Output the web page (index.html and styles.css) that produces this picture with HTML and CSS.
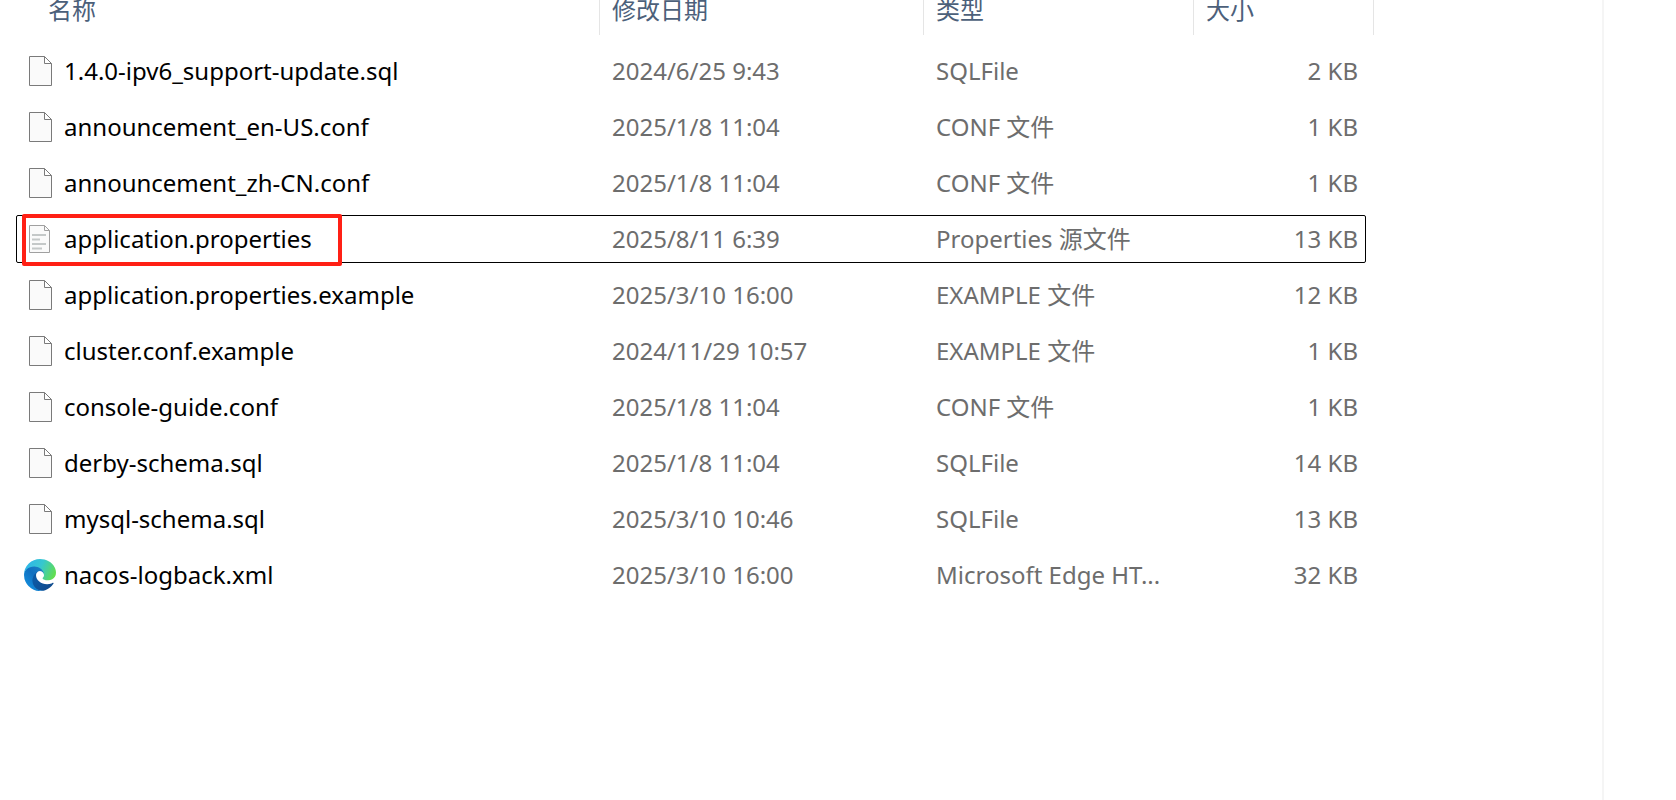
FILE: index.html
```html
<!DOCTYPE html>
<html lang="zh-CN">
<head>
  <meta charset="UTF-8" />
  <meta name="viewport" content="width=device-width, initial-scale=1" />
  <title>conf</title>
  <link rel="stylesheet" href="styles.css">
</head>
<body>

  <!-- shared icons -->
  <svg class="sprite" aria-hidden="true">
    <symbol id="icon-file" viewBox="0 0 32 32">
      <path d="M5.5 1.5h15v7h7v22h-22z" fill="#fafafa" stroke="#7a7a7a" />
      <path d="M20.5 1.5l7 7" fill="none" stroke="#7a7a7a" />
    </symbol>
    <symbol id="icon-text" viewBox="0 0 32 32">
      <path d="M5.5 2.5h15l5 5v22h-20z" fill="#fafafa" stroke="#a0a0a0" />
      <path d="M20.5 2.5v5h5" fill="none" stroke="#a0a0a0" />
      <path d="M8 12h14M8 16.500h8M8 21h14M8 25.500h10" fill="none" stroke="#c4c8c8" stroke-width="1.800" />
    </symbol>
    <symbol id="icon-edge" viewBox="0 0 256 256">
      <path fill="url(#edgeDeep)" d="M231 190.500c-3.400 1.800-6.900 3.400-10.500 4.700a101.700 101.700 0 0 1-35.900 6.500c-47.300 0-88.500-32.500-88.500-74.300a31.500 31.500 0 0 1 16.400-27.300c-42.800 1.800-53.800 46.400-53.800 72.500 0 74 68.100 81.400 82.800 81.400 7.900 0 19.800-2.300 27-4.600l1.300-.4a128.300 128.300 0 0 0 66.600-52.800 4 4 0 0 0-5.400-5.700z" />
      <path fill="url(#edgeBlue)" d="M105.700 241.400a79.200 79.200 0 0 1-22.700-21.300 80.700 80.700 0 0 1 29.500-120c3.200-1.500 8.500-4.100 15.600-4a32.400 32.400 0 0 1 25.700 13 31.900 31.900 0 0 1 6.300 18.700c0-.2 24.500-79.600-80-79.600-43.900 0-80 41.600-80 78.200a130.200 130.200 0 0 0 12.100 56 128 128 0 0 0 156.400 67 75.500 75.500 0 0 1-62.900-8z" />
      <path fill="url(#edgeGreen)" d="M152.300 148.900c-.9 1-3.400 2.500-3.400 5.600 0 2.600 1.700 5.200 4.800 7.300 14.300 10 41.400 8.600 41.500 8.600a59.600 59.600 0 0 0 30.300-8.300 61.400 61.400 0 0 0 30.400-52.900c.3-22.400-8-37.300-11.300-43.900C223.500 23.900 177.700 0 128 0A128 128 0 0 0 0 126.200c.5-36.500 36.800-66 80-66 3.500 0 23.500.3 42 10a72.600 72.600 0 0 1 30.900 29.300c6.100 10.600 7.200 24.100 7.200 29.500s-2.700 13.300-7.800 19.900z" />
    </symbol>
    <defs>
      <linearGradient id="edgeDeep" x1="0.2" y1="0.3" x2="1" y2="0.8">
        <stop offset="0" stop-color="#0c59a4" />
        <stop offset="1" stop-color="#114a8b" />
      </linearGradient>
      <linearGradient id="edgeBlue" x1="0.9" y1="0.2" x2="0.2" y2="1">
        <stop offset="0" stop-color="#1b7cc4" />
        <stop offset="0.4" stop-color="#0f6fc0" />
        <stop offset="1" stop-color="#1492e0" />
      </linearGradient>
      <linearGradient id="edgeGreen" x1="0" y1="0.3" x2="1" y2="0.6">
        <stop offset="0" stop-color="#2fb4ec" />
        <stop offset="0.5" stop-color="#36c7cf" />
        <stop offset="1" stop-color="#62de4e" />
      </linearGradient>
    </defs>
  </svg>

  <div class="explorer">
    <main class="file-pane">
      <table class="file-list">
        <colgroup>
          <col class="col-name">
          <col class="col-date">
          <col class="col-type">
          <col class="col-size">
        </colgroup>
        <thead>
          <tr>
            <th scope="col"><div class="head-cell head-name">名称</div></th>
            <th scope="col"><div class="head-cell">修改日期</div></th>
            <th scope="col"><div class="head-cell">类型</div></th>
            <th scope="col"><div class="head-cell">大小</div></th>
          </tr>
        </thead>
        <tbody>
          <tr>
            <td><div class="file-name"><svg class="icon"><use href="#icon-file" /></svg>1.4.0-ipv6_support-update.sql</div></td>
            <td>2024/6/25 9:43</td>
            <td>SQLFile</td>
            <td class="size">2 KB</td>
          </tr>
          <tr>
            <td><div class="file-name"><svg class="icon"><use href="#icon-file" /></svg>announcement_en-US.conf</div></td>
            <td>2025/1/8 11:04</td>
            <td>CONF 文件</td>
            <td class="size">1 KB</td>
          </tr>
          <tr>
            <td><div class="file-name"><svg class="icon"><use href="#icon-file" /></svg>announcement_zh-CN.conf</div></td>
            <td>2025/1/8 11:04</td>
            <td>CONF 文件</td>
            <td class="size">1 KB</td>
          </tr>
          <tr class="focused">
            <td><div class="file-name marked"><svg class="icon"><use href="#icon-text" /></svg>application.properties</div></td>
            <td>2025/8/11 6:39</td>
            <td>Properties 源文件</td>
            <td class="size">13 KB</td>
          </tr>
          <tr>
            <td><div class="file-name"><svg class="icon"><use href="#icon-file" /></svg>application.properties.example</div></td>
            <td>2025/3/10 16:00</td>
            <td>EXAMPLE 文件</td>
            <td class="size">12 KB</td>
          </tr>
          <tr>
            <td><div class="file-name"><svg class="icon"><use href="#icon-file" /></svg>cluster.conf.example</div></td>
            <td>2024/11/29 10:57</td>
            <td>EXAMPLE 文件</td>
            <td class="size">1 KB</td>
          </tr>
          <tr>
            <td><div class="file-name"><svg class="icon"><use href="#icon-file" /></svg>console-guide.conf</div></td>
            <td>2025/1/8 11:04</td>
            <td>CONF 文件</td>
            <td class="size">1 KB</td>
          </tr>
          <tr>
            <td><div class="file-name"><svg class="icon"><use href="#icon-file" /></svg>derby-schema.sql</div></td>
            <td>2025/1/8 11:04</td>
            <td>SQLFile</td>
            <td class="size">14 KB</td>
          </tr>
          <tr>
            <td><div class="file-name"><svg class="icon"><use href="#icon-file" /></svg>mysql-schema.sql</div></td>
            <td>2025/3/10 10:46</td>
            <td>SQLFile</td>
            <td class="size">13 KB</td>
          </tr>
          <tr>
            <td><div class="file-name"><svg class="icon"><use href="#icon-edge" /></svg>nacos-logback.xml</div></td>
            <td>2025/3/10 16:00</td>
            <td>Microsoft Edge HT...</td>
            <td class="size">32 KB</td>
          </tr>
        </tbody>
      </table>
    </main>
    <aside class="side-pane"></aside>
  </div>

</body>
</html>
```
FILE: styles.css
```css
* {
  box-sizing: border-box;
}
body {
  margin: 0;
  background: #fff;
  color: #6d6d6d;
  font-family: "Noto Sans", "Noto Sans CJK SC", sans-serif;
  font-size: 24px;
  line-height: 32px;
}
.sprite {
  position: absolute;
  width: 0;
  height: 0;
}
.explorer {
  display: flex;
  min-height: 100vh;
}
.file-pane {
  flex: 1;
  padding-left: 16px;
}
.side-pane {
  width: 74px;
  border-left: 2px solid #f5f5f5;
}

/* file list */
.file-list {
  table-layout: fixed;
  width: 1358px;
  border-collapse: collapse;
}
.col-name { width: 584px; }
.col-date { width: 324px; }
.col-type { width: 270px; }
.col-size { width: 180px; }

th {
  padding: 0 0 8px;
  font-weight: normal;
  text-align: left;
  color: #4c607a;
}
.head-cell {
  height: 35px;
  padding-left: 12px;
  border-right: 1px solid #e5e5e5;
  line-height: 20px;
}
.head-name {
  padding-left: 32px;
}
td {
  height: 56px;
  padding: 0 0 0 12px;
  white-space: nowrap;
}
td:first-child {
  padding-left: 8px;
}
.size {
  padding-right: 16px;
  text-align: right;
}
.file-name {
  display: flex;
  align-items: center;
  gap: 8px;
  color: #000;
}
.icon {
  width: 32px;
  height: 32px;
  flex: none;
}

/* keyboard focus frame */
.focused {
  position: relative;
}
.focused::after {
  content: "";
  position: absolute;
  inset: 4px 8px 4px 0;
  border: 1px solid #000;
  border-radius: 2px;
}

/* red highlight round the file */
.marked {
  position: relative;
}
.marked::after {
  content: "";
  position: absolute;
  z-index: 1;
  top: -9px;
  bottom: -11px;
  left: -2px;
  width: 312px;
  border: 4px solid #ff2015;
  border-radius: 2px;
}
```
